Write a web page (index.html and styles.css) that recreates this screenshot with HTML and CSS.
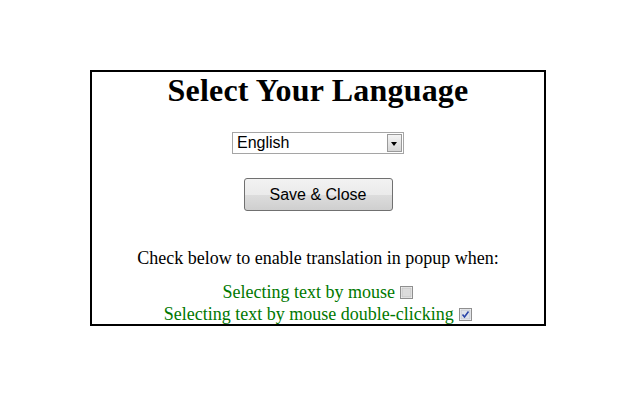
FILE: index.html
```html
<!DOCTYPE html>
<html lang="en">
<head>
  <meta charset="UTF-8">
  <title>Select Your Language</title>
  <link rel="stylesheet" href="styles.css">
</head>
<body>

  <div class="popup">
    <h1>Select Your Language</h1>
    <div class="select">
      <span class="value">English</span>
      <span class="arrow"></span>
    </div>
    <button class="save">Save &amp; Close</button>
    <p class="note">Check below to enable translation in popup when:</p>
    <label class="option">Selecting text by mouse
      <svg class="box" width="13" height="13" viewBox="0 0 13 13">
        <rect x="0.5" y="0.5" width="12" height="12" fill="#fff" stroke="#8f8f8f"/>
        <rect x="2" y="2" width="9" height="9" fill="#dcdcdc" stroke="#c4c4c4"/>
      </svg>
    </label>
    <label class="option">Selecting text by mouse double-clicking
      <svg class="box" width="13" height="13" viewBox="0 0 13 13">
        <rect x="0.5" y="0.5" width="12" height="12" fill="#fff" stroke="#8f8f8f"/>
        <rect x="2" y="2" width="9" height="9" fill="#dfe3ea" stroke="#c4c8d0"/>
        <path d="M3.5 6.5 L5.5 9 L9.5 3.5" fill="none" stroke="#2a45a8" stroke-width="1.6"/>
      </svg>
    </label>
  </div>

</body>
</html>
```

FILE: styles.css
```css
body {
  margin: 0;
  font-family: "Liberation Serif", "Times New Roman", serif;
  background: #fff;
}
.popup {
  width: 452px;
  height: 252px;
  margin: 70px 0 0 90px;
  border: 2px solid #000;
  text-align: center;
}
h1 {
  margin: 0;
  font-size: 32px;
  line-height: 36px;
  letter-spacing: 0.2px;
}
.select {
  display: flex;
  width: 170px;
  height: 20px;
  margin: 24px auto 0;
  border: 1px solid #a5a5a5;
  font-family: "Liberation Sans", Arial, sans-serif;
  font-size: 16px;
  text-align: left;
}
.select .value {
  flex: 1;
  padding-left: 4px;
  line-height: 20px;
}
.select .arrow {
  position: relative;
  width: 15px;
  margin: 1px;
  border: 1px solid #9a9a9a;
  box-sizing: border-box;
  background: linear-gradient(#f4f4f4, #d6d6d6);
}
.select .arrow::after {
  content: "";
  position: absolute;
  left: 3px;
  top: 7px;
  border-left: 3.5px solid transparent;
  border-right: 3.5px solid transparent;
  border-top: 4px solid #000;
}
.save {
  display: block;
  width: 149px;
  height: 33px;
  margin: 24px auto 0;
  border: 1px solid #707070;
  border-radius: 3px;
  background: linear-gradient(#f2f2f2 0%, #ebebeb 50%, #dddddd 51%, #cfcfcf 100%);
  font-family: "Liberation Sans", Arial, sans-serif;
  font-size: 16px;
  color: #000;
}
.note {
  margin: 37px 0 12px;
  font-size: 18px;
}
.option {
  display: block;
  color: #007800;
  font-size: 18px;
  line-height: 22px;
}
.box {
  vertical-align: -1px;
  margin-left: 1px;
}
```
